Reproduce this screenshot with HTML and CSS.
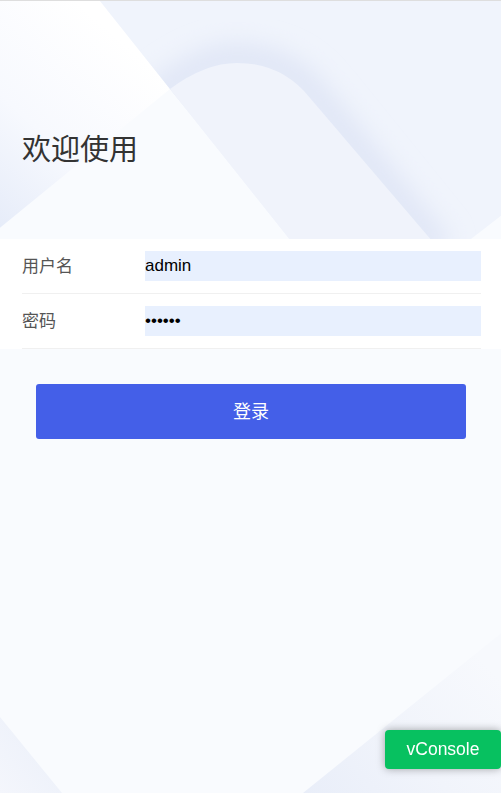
FILE: index.html
```html
<!DOCTYPE html>
<html lang="zh-CN">
<head>
  <meta charset="UTF-8">
  <meta name="viewport" content="width=device-width, initial-scale=1.0">
  <title>登录</title>
  <link rel="stylesheet" href="styles.css">
</head>
<body>

  <div class="page">
    <!-- decorative background shapes -->
    <svg class="bg" viewBox="0 0 501 793" preserveAspectRatio="none" aria-hidden="true">
      <defs>
        <linearGradient id="tl" x1="0.6" y1="0.1" x2="0" y2="1">
          <stop offset="0" stop-color="#ffffff"/>
          <stop offset="0.55" stop-color="#f7f9fe"/>
          <stop offset="1" stop-color="#e6ecf9"/>
        </linearGradient>
        <linearGradient id="br" x1="0" y1="1" x2="1" y2="0.3">
          <stop offset="0" stop-color="#e9eef9"/>
          <stop offset="0.5" stop-color="#f1f4fb"/>
          <stop offset="1" stop-color="#f7f9fd"/>
        </linearGradient>
        <linearGradient id="bl" x1="1" y1="0" x2="0" y2="1">
          <stop offset="0" stop-color="#eaeff9"/>
          <stop offset="1" stop-color="#f4f6fc"/>
        </linearGradient>
        <filter id="blur" x="-20%" y="-20%" width="140%" height="140%">
          <feGaussianBlur stdDeviation="12"/>
        </filter>
        <clipPath id="upper">
          <polygon points="100,0 501,0 501,215 470,239 290,239 170,88"/>
        </clipPath>
      </defs>
      <rect width="501" height="793" fill="#f9fbfe"/>
      <polygon points="0,0 100,0 170,88 0,227" fill="url(#tl)"/>
      <polygon points="100,0 501,0 501,215 470,239 290,239 170,88" fill="#f0f4fc"/>
      <g clip-path="url(#upper)">
        <path d="M150,100 Q205,55 237,58 Q285,58 315,95 L440,250" fill="none" stroke="#e0e6f6" stroke-width="30" filter="url(#blur)"/>
      </g>
      <path d="M170,88 Q205,62 237,62 Q282,62 310,97 L431,239 L290,239 Z" fill="#f0f3fb"/>
      <polygon points="501,633 303,793 501,793" fill="url(#br)"/>
      <polygon points="0,717 62,793 0,793" fill="url(#bl)"/>
    </svg>

    <div class="content">
      <header class="header">
        <h1 class="title">欢迎使用</h1>
      </header>

      <form class="login-form" onsubmit="return false;">
        <div class="field">
          <label class="field-label" for="username">用户名</label>
          <input class="field-input" id="username" type="text" value="admin">
        </div>
        <div class="field">
          <label class="field-label" for="password">密码</label>
          <input class="field-input" id="password" type="password" value="123456">
        </div>
      </form>

      <div class="actions">
        <button class="login-btn" type="button">登录</button>
      </div>
    </div>

    <div class="vconsole-switch">vConsole</div>
  </div>

</body>
</html>
```

FILE: styles.css
```css
body {
  margin: 0;
  font-family: "Noto Sans CJK SC", "Liberation Sans", sans-serif;
  color: #333;
  background: #f9fbfe;
  border-top: 1px solid #dedede;
}
.page {
  position: relative;
  min-height: 792px;
  overflow: hidden;
}
.bg {
  position: absolute;
  top: 0;
  left: 0;
  width: 100%;
  height: 100%;
  z-index: 0;
}
.content {
  position: relative;
  z-index: 1;
}
.header {
  height: 238px;
  padding: 0 22px;
  box-sizing: border-box;
  padding-top: 126px;
}
.title {
  margin: 0;
  font-size: 29px;
  font-weight: normal;
  line-height: 40px;
  color: #333;
}
.login-form {
  background: #ffffff;
  padding: 0 20px 0 22px;
}
.field {
  display: flex;
  align-items: center;
  height: 54px;
  border-bottom: 1px solid #f0f0f0;
}
.field-label {
  width: 123px;
  flex-shrink: 0;
  padding-bottom: 4px;
  font-size: 17px;
  color: #555;
}
.field-input {
  flex: 1;
  height: 30px;
  margin: 0;
  padding: 0;
  border: none;
  outline: none;
  background: #e8f0fe;
  font-family: "Liberation Sans", Arial, sans-serif;
  font-size: 17px;
  color: #000;
}
.actions {
  padding: 35px 35px 0 36px;
}
.login-btn {
  display: block;
  width: 100%;
  height: 55px;
  padding: 0 0 4px;
  border: none;
  border-radius: 3px;
  background: #445fe8;
  color: #fff;
  font-family: "Noto Sans CJK SC", sans-serif;
  font-size: 18px;
  cursor: pointer;
}
.vconsole-switch {
  position: fixed;
  right: 0;
  bottom: 24px;
  z-index: 10;
  width: 116px;
  height: 39px;
  display: flex;
  align-items: center;
  justify-content: center;
  background: #07c160;
  color: #fff;
  border-radius: 4px;
  box-shadow: 0 0 8px rgba(0, 0, 0, 0.35);
  font-family: "Liberation Sans", Arial, sans-serif;
  font-size: 17.5px;
}
```
